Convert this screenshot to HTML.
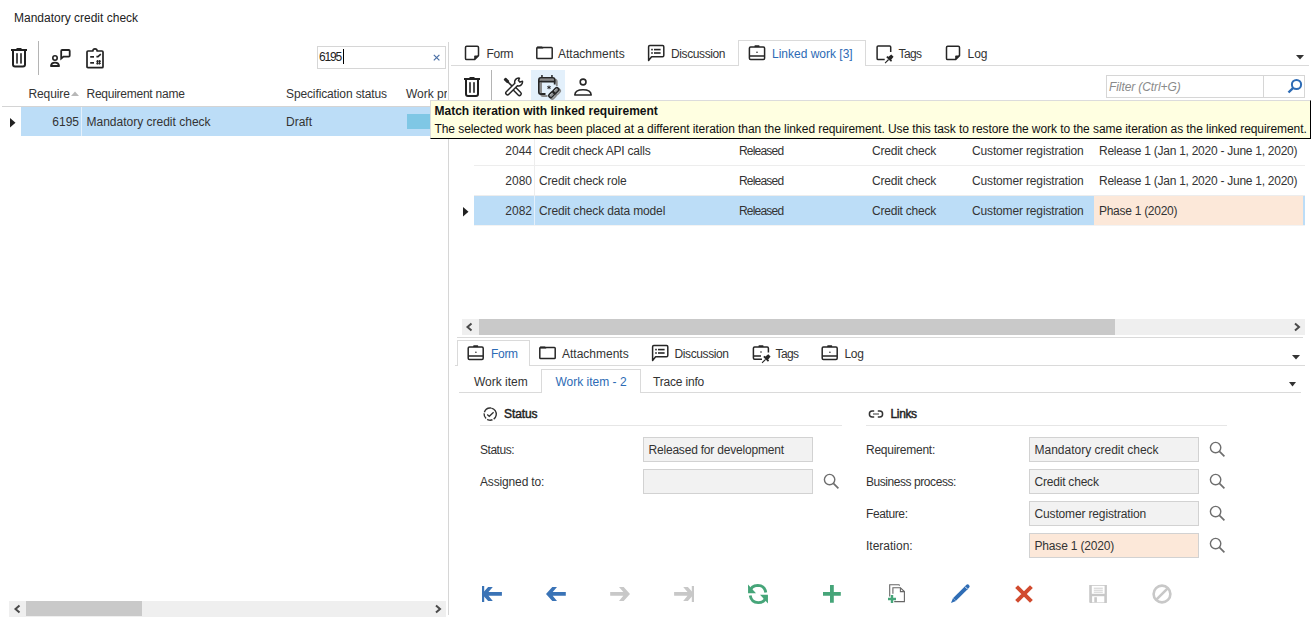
<!DOCTYPE html>
<html><head><meta charset="utf-8">
<style>
*{box-sizing:border-box}
html,body{margin:0;padding:0}
body{width:1316px;height:622px;overflow:hidden;background:#fff;position:relative;font-family:"Liberation Sans",sans-serif;font-size:12px;color:#333}
.a{position:absolute}
.t{position:absolute;white-space:nowrap;line-height:14px}
.ln{position:absolute;background:#dadada}
.blue{color:#2d6bb5}
svg{position:absolute;overflow:visible}
.inp{position:absolute;background:#f2f2f2;border:1px solid #d2d2d2}
</style></head><body>

<!-- ============ LEFT PANEL ============ -->
<div class="t" style="left:14px;top:11px;color:#222">Mandatory credit check</div>

<!-- trash -->
<svg style="left:10px;top:47px" width="18" height="22" viewBox="0 0 18 22">
<rect x="1" y="2" width="16" height="2" fill="#222"/><rect x="6.5" y="1" width="5" height="1.5" fill="#222"/>
<path d="M3,4 V17.6 Q3,19.6 5,19.6 H13 Q15,19.6 15,17.6 V4" fill="none" stroke="#222" stroke-width="2"/>
<rect x="6.2" y="6.2" width="1.6" height="10.4" fill="#222"/><rect x="10.2" y="6.2" width="1.6" height="10.4" fill="#222"/>
</svg>
<div class="ln" style="left:38px;top:41px;width:1px;height:34px;background:#b4b4b4"></div>
<!-- person flag -->
<svg style="left:49px;top:48px" width="22" height="20" viewBox="0 0 22 20">
<circle cx="6" cy="10" r="2.2" fill="none" stroke="#222" stroke-width="1.6"/>
<path d="M2,18 Q2.2,14.6 6,14.6 Q9.8,14.6 10,18 Z" fill="none" stroke="#222" stroke-width="1.9" stroke-linejoin="round"/>
<path d="M12.2,10.6 V3 Q12.2,2 13.2,2 H19.8 Q20.7,2 20.7,3 V7.6 Q20.7,8.6 19.8,8.6 H14.5 L12.2,10.6 Z" fill="none" stroke="#222" stroke-width="1.8"/>
</svg>
<!-- clipboard -->
<svg style="left:85px;top:47px" width="20" height="22" viewBox="0 0 20 22">
<path d="M2,5 Q2,4 3,4 H7.8 Q8,1.8 10,1.8 Q12,1.8 12.2,4 H17 Q18,4 18,5 V19.7 Q18,20.7 17,20.7 H3 Q2,20.7 2,19.7 Z" fill="none" stroke="#222" stroke-width="1.7"/>
<rect x="5.2" y="9" width="3.8" height="1.7" fill="#222"/><rect x="5.2" y="15" width="3.8" height="1.7" fill="#222"/>
<path d="M11.4,9.6 H13 L15.8,7.2" fill="none" stroke="#222" stroke-width="1.6"/>
<path d="M11.2,14.3 H16 M11.2,16.3 H16 M12.7,13 L12.2,17.6 M14.7,13 L14.2,17.6" fill="none" stroke="#222" stroke-width="1.1"/>
</svg>

<!-- search box -->
<div class="a" style="left:317px;top:46px;width:129px;height:23px;border:1px solid #d6d6d6"></div>
<div class="t" style="left:319px;top:50px;color:#222;letter-spacing:-1.15px">6195</div>
<div class="a" style="left:343px;top:49px;width:1px;height:15px;background:#000"></div>
<svg style="left:433px;top:54px" width="8" height="8" viewBox="0 0 8 8"><path d="M0.8,0.8 L6.4,6.4 M6.4,0.8 L0.8,6.4" stroke="#4a6fa5" stroke-width="1.2"/></svg>

<!-- header -->
<div class="t" style="left:28.5px;top:87px;letter-spacing:-0.12px">Require</div>
<svg style="left:70.5px;top:91px" width="8" height="5" viewBox="0 0 8 5"><path d="M0,5 L4,0.5 L8,5 Z" fill="#b8b8b8"/></svg>
<div class="t" style="left:86.5px;top:87px;letter-spacing:-0.25px">Requirement name</div>
<div class="t" style="left:286px;top:87px;letter-spacing:-0.12px">Specification status</div>
<div class="a" style="left:0;top:80px;width:447px;height:20px;overflow:hidden"><div class="t" style="left:406px;top:7px">Work progress</div></div>
<div class="ln" style="left:2px;top:106px;width:446px;height:1px;background:#d4d4d4"></div>
<div class="a" style="left:21px;top:107px;width:427px;height:29px;background:#bcddf7"></div>
<div class="a" style="left:81px;top:107px;width:1px;height:29px;background:#e4f0fb"></div>
<svg style="left:10px;top:118px" width="6" height="10" viewBox="0 0 6 10"><path d="M0,0 L5.5,4.7 L0,9.4 Z" fill="#222"/></svg>
<div class="t" style="left:0;width:79px;text-align:right;top:115px">6195</div>
<div class="t" style="left:86.5px;top:115px">Mandatory credit check</div>
<div class="t" style="left:286px;top:115px">Draft</div>
<div class="a" style="left:407px;top:114px;width:30px;height:15px;background:#7fc7e5"></div>

<!-- left h-scrollbar -->
<div class="a" style="left:9px;top:601px;width:437px;height:16px;background:#efefef"></div>
<div class="a" style="left:26px;top:601px;width:116px;height:15px;background:#c9c9c9"></div>
<svg style="left:14px;top:604.5px" width="7" height="8" viewBox="0 0 7 8"><path d="M5.5,0.5 L1.5,4 L5.5,7.5" fill="none" stroke="#4a4a4a" stroke-width="2"/></svg>
<svg style="left:435px;top:604.5px" width="7" height="8" viewBox="0 0 7 8"><path d="M1,0.5 L5,4 L1,7.5" fill="none" stroke="#4a4a4a" stroke-width="2"/></svg>

<!-- splitter -->
<div class="ln" style="left:448px;top:42px;width:1px;height:573px;background:#d6d6d6"></div>

<!-- ============ RIGHT PANEL TOP TABS ============ -->
<div class="ln" style="left:451px;top:65px;width:858px;height:1px"></div>
<div class="a" style="left:738px;top:40px;width:128px;height:26px;border:1px solid #dadada;border-bottom:none;background:#fff"></div>
<div class="t" style="left:486.5px;top:47px;letter-spacing:-0.3px">Form</div>
<div class="t" style="left:558px;top:47px">Attachments</div>
<div class="t" style="left:671px;top:47px;letter-spacing:-0.39px">Discussion</div>
<div class="t blue" style="left:772px;top:47px">Linked work [3]</div>
<div class="t" style="left:898.5px;top:47px;letter-spacing:-0.6px">Tags</div>
<div class="t" style="left:967.5px;top:47px">Log</div>
<svg style="left:1296px;top:55px" width="8" height="5" viewBox="0 0 8 5"><path d="M0,0 L8,0 L4,4.5 Z" fill="#333"/></svg>


<!-- top tab icons -->
<svg style="left:464px;top:45px" width="16" height="16" viewBox="0 0 16 16">
<path d="M1.5,2.4 Q1.5,1.2 2.7,1.2 H13.3 Q14.5,1.2 14.5,2.4 V10.6 L10.5,14.6 H2.7 Q1.5,14.6 1.5,13.4 Z" fill="none" stroke="#262626" stroke-width="1.5" stroke-linejoin="round"/>
<path d="M10.2,14.8 V11.2 Q10.2,10.4 11,10.4 H14.8 Z" fill="#262626"/></svg>
<svg style="left:536px;top:46px" width="17" height="14" viewBox="0 0 17 14">
<path d="M0.8,11.8 V2.2 Q0.8,1.4 1.6,1.4 H15.4 Q16.2,1.4 16.2,2.2 V11.8 Q16.2,12.6 15.4,12.6 H1.6 Q0.8,12.6 0.8,11.8 Z" fill="none" stroke="#262626" stroke-width="1.5"/>
<path d="M0.8,2.4 V1.2 Q0.8,0.6 1.4,0.6 H6 L7.2,1.8 V2.4 Z" fill="#262626"/></svg>
<svg style="left:647px;top:44px" width="18" height="18" viewBox="0 0 18 18">
<path d="M1.6,16.4 V2.8 Q1.6,1.6 2.8,1.6 H15.6 Q16.8,1.6 16.8,2.8 V11.6 Q16.8,12.8 15.6,12.8 H4.6 Z" fill="none" stroke="#262626" stroke-width="1.5" stroke-linejoin="round"/>
<rect x="4.2" y="4.8" width="1.6" height="1.6" fill="#262626"/><rect x="7" y="4.8" width="6.6" height="1.6" fill="#262626"/>
<rect x="4.2" y="8.2" width="1.6" height="1.6" fill="#262626"/><rect x="7" y="8.2" width="6.6" height="1.6" fill="#262626"/></svg>
<svg style="left:748px;top:44px" width="18" height="17" viewBox="0 0 18 17">
<path d="M2.6,3 H15.4 Q16.6,3 16.6,4.2 V14.2 Q16.6,15.4 15.4,15.4 H2.6 Q1.4,15.4 1.4,14.2 V4.2 Q1.4,3 2.6,3 Z M1.4,12 H16.6" fill="none" stroke="#262626" stroke-width="1.5"/>
<rect x="6.5" y="1.2" width="5" height="1.8" rx="0.6" fill="#262626"/><circle cx="9" cy="8.2" r="0.8" fill="#262626"/></svg>
<svg style="left:876px;top:45px" width="20" height="19" viewBox="0 0 20 19">
<path d="M8.7,14.6 H2.2 Q1.1,14.6 1.1,13.5 V2.1 Q1.1,1 2.2,1 H13.6 Q14.7,1 14.7,2.1 V7" fill="none" stroke="#262626" stroke-width="1.5"/>
<g transform="translate(12.6,14.5) rotate(45)"><path d="M-1.6,-5.4 H1.6 L2.1,-1.4 H-2.1 Z M-3.3,-1.7 H3.3 V0 H-3.3 Z" fill="#262626"/><path d="M0,0 V5" stroke="#262626" stroke-width="1.1"/></g></svg>
<svg style="left:945px;top:45px" width="16" height="16" viewBox="0 0 16 16">
<path d="M1.5,2.4 Q1.5,1.2 2.7,1.2 H13.3 Q14.5,1.2 14.5,2.4 V10.6 L10.5,14.6 H2.7 Q1.5,14.6 1.5,13.4 Z" fill="none" stroke="#262626" stroke-width="1.5" stroke-linejoin="round"/>
<path d="M10.2,14.8 V11.2 Q10.2,10.4 11,10.4 H14.8 Z" fill="#262626"/></svg>

<!-- toolbar -->
<svg style="left:463px;top:76px" width="18" height="22" viewBox="0 0 18 22">
<rect x="1" y="2" width="16" height="2" fill="#222"/><rect x="6.5" y="1" width="5" height="1.5" fill="#222"/>
<path d="M3,4 V18 Q3,20 5,20 H13 Q15,20 15,18 V4" fill="none" stroke="#222" stroke-width="2"/>
<rect x="6.2" y="6.2" width="1.6" height="10.6" fill="#222"/><rect x="10.2" y="6.2" width="1.6" height="10.6" fill="#222"/>
</svg>
<div class="ln" style="left:491px;top:70px;width:1px;height:30px;background:#b4b4b4"></div>
<div class="a" style="left:531px;top:70px;width:34px;height:30px;background:#e3f0fb"></div>


<!-- tools -->
<svg style="left:500px;top:74px" width="28" height="26" viewBox="0 0 28 26">
<rect x="-5.1" y="-1.8" width="10.2" height="3.6" rx="1.8" transform="translate(17.1,17.4) rotate(45)" fill="#fff" stroke="#262626" stroke-width="1.5"/>
<path d="M7.5,7.5 L13.5,13.5" stroke="#262626" stroke-width="1.6"/>
<rect x="-3" y="-1.6" width="5.6" height="3.2" rx="1" transform="translate(6.6,6.6) rotate(45)" fill="#262626"/>
<path transform="translate(18.6,8) rotate(-45)" d="M-3.5,-1.8 H-15.6 A1.8,1.8 0 0 0 -15.6,1.8 H-3.5 A3.95,3.95 0 0 0 3.3,2.1 L0.9,1.1 V-1.1 L3.3,-2.1 A3.95,3.95 0 0 0 -3.5,-1.8 Z" fill="#fff" stroke="#262626" stroke-width="1.5" stroke-linejoin="round"/>
</svg>
<!-- calendar -->
<svg style="left:532px;top:70px" width="34" height="31" viewBox="0 0 34 31">
<path d="M15.5,26 H11 Q9.1,26 9.1,24 V11.6 Q9.1,9.6 11,9.6 H22.8 Q24.8,9.6 24.8,11.6 V16" fill="none" stroke="#8a8a8a" stroke-width="1.8"/>
<path d="M13.5,24 H8.9 Q6.9,24 6.9,22 V9.9 Q6.9,7.9 8.9,7.9 H20.7 Q22.7,7.9 22.7,9.9 V14.5" fill="none" stroke="#262626" stroke-width="1.8"/>
<rect x="7.8" y="8.7" width="14" height="2" fill="#8a8a8a"/>
<rect x="6.2" y="10.7" width="17.2" height="1.8" fill="#262626"/>
<rect x="7.8" y="12.5" width="2" height="10.6" fill="#8a8a8a"/>
<rect x="9.2" y="5" width="1.5" height="3" fill="#262626"/><rect x="19.2" y="5" width="1.5" height="3" fill="#262626"/>
<g transform="translate(23.3,24) rotate(-45)" fill="none" stroke="#8a8a8a" stroke-width="1.6"><rect x="-6.2" y="-1.9" width="6.6" height="3.8" rx="1.9"/><rect x="-0.4" y="-1.9" width="6.6" height="3.8" rx="1.9"/></g>
<g transform="translate(21.8,22.6) rotate(-45)" fill="none" stroke="#262626" stroke-width="1.6"><rect x="-6.2" y="-1.9" width="6.6" height="3.8" rx="1.9"/><rect x="-0.4" y="-1.9" width="6.6" height="3.8" rx="1.9"/></g>
<path d="M17,15.6 V19.2 M15.3,16.5 L18.7,18.3 M18.7,16.5 L15.3,18.3" stroke="#262626" stroke-width="1"/>
</svg>
<!-- person -->
<svg style="left:573px;top:77px" width="20" height="20" viewBox="0 0 20 20">
<circle cx="10.1" cy="5" r="2.9" fill="none" stroke="#262626" stroke-width="1.6"/>
<path d="M1.8,18 Q2.2,12.8 10,12.8 Q17.8,12.8 18.2,18 Z" fill="none" stroke="#262626" stroke-width="1.6" stroke-linejoin="round"/></svg>

<!-- filter -->
<div class="a" style="left:1106px;top:75px;width:199px;height:23px;border:1px solid #d6d6d6"></div>
<div class="ln" style="left:1263px;top:76px;width:1px;height:21px;background:#d6d6d6"></div>
<div class="t" style="left:1109px;top:80px;color:#8a8a8a;font-style:italic;letter-spacing:-0.09px">Filter (Ctrl+G)</div>
<svg style="left:1287px;top:78px" width="16" height="16" viewBox="0 0 16 16"><circle cx="9.5" cy="6.5" r="4.6" fill="none" stroke="#2d6bb5" stroke-width="2"/><path d="M6.2,9.8 L1.5,14.5" stroke="#2d6bb5" stroke-width="2.4"/></svg>

<!-- grid rows -->
<div class="ln" style="left:474px;top:165px;width:831px;height:1px;background:#ededed"></div>
<div class="ln" style="left:474px;top:195px;width:831px;height:1px;background:#ededed"></div>
<div class="a" style="left:474px;top:196px;width:620px;height:29px;background:#bcddf7"></div>
<div class="ln" style="left:474px;top:225px;width:831px;height:1px;background:#f3f3f3"></div>
<div class="a" style="left:1094px;top:196px;width:209px;height:29px;background:#fce8d9"></div>
<div class="a" style="left:1303px;top:196px;width:2px;height:29px;background:#bcddf7"></div>
<div class="ln" style="left:534px;top:135px;width:1px;height:61px;background:#ededed"></div>
<div class="ln" style="left:534px;top:196px;width:1px;height:29px;background:#e4f0fb"></div>
<svg style="left:463px;top:207px" width="6" height="10" viewBox="0 0 6 10"><path d="M0,0 L5.5,4.7 L0,9.4 Z" fill="#222"/></svg>

<div class="t" style="left:474px;width:58px;text-align:right;top:144px">2044</div>
<div class="t" style="left:539px;top:144px;letter-spacing:-0.21px">Credit check API calls</div>
<div class="t" style="left:739px;top:144px;letter-spacing:-0.8px">Released</div>
<div class="t" style="left:872px;top:144px;letter-spacing:-0.22px">Credit check</div>
<div class="t" style="left:972px;top:144px;letter-spacing:-0.15px">Customer registration</div>
<div class="t" style="left:1099px;top:144px;letter-spacing:-0.26px">Release 1 (Jan 1, 2020 - June 1, 2020)</div>

<div class="t" style="left:474px;width:58px;text-align:right;top:174px">2080</div>
<div class="t" style="left:539px;top:174px;letter-spacing:-0.15px">Credit check role</div>
<div class="t" style="left:739px;top:174px;letter-spacing:-0.8px">Released</div>
<div class="t" style="left:872px;top:174px;letter-spacing:-0.22px">Credit check</div>
<div class="t" style="left:972px;top:174px;letter-spacing:-0.15px">Customer registration</div>
<div class="t" style="left:1099px;top:174px;letter-spacing:-0.26px">Release 1 (Jan 1, 2020 - June 1, 2020)</div>

<div class="t" style="left:474px;width:58px;text-align:right;top:204px">2082</div>
<div class="t" style="left:539px;top:204px;letter-spacing:-0.14px">Credit check data model</div>
<div class="t" style="left:739px;top:204px;letter-spacing:-0.8px">Released</div>
<div class="t" style="left:872px;top:204px;letter-spacing:-0.22px">Credit check</div>
<div class="t" style="left:972px;top:204px;letter-spacing:-0.15px">Customer registration</div>
<div class="t" style="left:1099px;top:204px;letter-spacing:-0.28px">Phase 1 (2020)</div>

<!-- grid scrollbar -->
<div class="a" style="left:462px;top:319px;width:843px;height:16px;background:#efefef"></div>
<div class="a" style="left:479px;top:319px;width:636px;height:16px;background:#c9c9c9"></div>
<svg style="left:466px;top:323px" width="7" height="8" viewBox="0 0 7 8"><path d="M5.5,0.5 L1.5,4 L5.5,7.5" fill="none" stroke="#4a4a4a" stroke-width="2"/></svg>
<svg style="left:1293.5px;top:323px" width="7" height="8" viewBox="0 0 7 8"><path d="M1,0.5 L5,4 L1,7.5" fill="none" stroke="#4a4a4a" stroke-width="2"/></svg>
<div class="ln" style="left:457px;top:337px;width:846px;height:1px"></div>

<!-- ============ BOTTOM FORM TABS ============ -->
<div class="ln" style="left:455px;top:365px;width:850px;height:1px"></div>
<div class="a" style="left:457px;top:340px;width:73px;height:26px;border:1px solid #dadada;border-bottom:none;background:#fff"></div>
<div class="t blue" style="left:491px;top:347px;letter-spacing:-0.3px">Form</div>
<div class="t" style="left:562px;top:347px">Attachments</div>
<div class="t" style="left:674.5px;top:347px;letter-spacing:-0.39px">Discussion</div>
<div class="t" style="left:775.5px;top:347px;letter-spacing:-0.6px">Tags</div>
<div class="t" style="left:844.5px;top:347px;letter-spacing:-0.3px">Log</div>
<svg style="left:1292px;top:355px" width="8" height="5" viewBox="0 0 8 5"><path d="M0,0 L8,0 L4,4.5 Z" fill="#333"/></svg>


<svg style="left:467px;top:344px" width="18" height="17" viewBox="0 0 18 17">
<path d="M2.4,3 H15 Q16.2,3 16.2,4.2 V14.2 Q16.2,15.4 15,15.4 H2.4 Q1.2,15.4 1.2,14.2 V4.2 Q1.2,3 2.4,3 Z M1.2,12 H16.2" fill="none" stroke="#262626" stroke-width="1.5"/>
<rect x="6.2" y="1.3" width="5" height="1.8" rx="0.6" fill="#262626"/><circle cx="8.9" cy="8.2" r="0.8" fill="#262626"/></svg>
<svg style="left:539px;top:346px" width="17" height="14" viewBox="0 0 17 14">
<path d="M0.8,11.8 V2.2 Q0.8,1.4 1.6,1.4 H15.4 Q16.2,1.4 16.2,2.2 V11.8 Q16.2,12.6 15.4,12.6 H1.6 Q0.8,12.6 0.8,11.8 Z" fill="none" stroke="#262626" stroke-width="1.5"/>
<path d="M0.8,2.4 V1.2 Q0.8,0.6 1.4,0.6 H6 L7.2,1.8 V2.4 Z" fill="#262626"/></svg>
<svg style="left:651px;top:344px" width="18" height="18" viewBox="0 0 18 18">
<path d="M1.6,16.4 V2.8 Q1.6,1.6 2.8,1.6 H15.6 Q16.8,1.6 16.8,2.8 V11.6 Q16.8,12.8 15.6,12.8 H4.6 Z" fill="none" stroke="#262626" stroke-width="1.5" stroke-linejoin="round"/>
<rect x="4.2" y="4.8" width="1.6" height="1.6" fill="#262626"/><rect x="7" y="4.8" width="6.6" height="1.6" fill="#262626"/>
<rect x="4.2" y="8.2" width="1.6" height="1.6" fill="#262626"/><rect x="7" y="8.2" width="6.6" height="1.6" fill="#262626"/></svg>
<svg style="left:752px;top:344px" width="20" height="20" viewBox="0 0 20 20">
<path d="M10,15.3 H2.6 Q1.4,15.3 1.4,14.1 V4.2 Q1.4,3 2.6,3 H15.2 Q16.4,3 16.4,4.2 V8.6 M1.4,12 H9" fill="none" stroke="#262626" stroke-width="1.5"/>
<rect x="6.5" y="1.3" width="5" height="1.8" rx="0.6" fill="#262626"/><circle cx="9" cy="8" r="0.8" fill="#262626"/>
<g transform="translate(13.6,15.3) rotate(45)"><path d="M-1.6,-5.4 H1.6 L2.1,-1.4 H-2.1 Z M-3.3,-1.7 H3.3 V0 H-3.3 Z" fill="#262626"/><path d="M0,0 V5" stroke="#262626" stroke-width="1.1"/></g></svg>
<svg style="left:821px;top:344px" width="18" height="17" viewBox="0 0 18 17">
<path d="M2.4,3 H15 Q16.2,3 16.2,4.2 V14.2 Q16.2,15.4 15,15.4 H2.4 Q1.2,15.4 1.2,14.2 V4.2 Q1.2,3 2.4,3 Z M1.2,12 H16.2" fill="none" stroke="#262626" stroke-width="1.5"/>
<rect x="6.2" y="1.3" width="5" height="1.8" rx="0.6" fill="#262626"/><circle cx="8.9" cy="8.2" r="0.8" fill="#262626"/></svg>

<!-- subtabs -->
<div class="ln" style="left:459px;top:392px;width:842px;height:1px"></div>
<div class="a" style="left:541px;top:369px;width:100px;height:24px;border:1px solid #dadada;border-bottom:none;background:#fff"></div>
<div class="t" style="left:474px;top:375px">Work item</div>
<div class="t blue" style="left:555.5px;top:375px">Work item - 2</div>
<div class="t" style="left:653px;top:375px;letter-spacing:-0.18px">Trace info</div>
<svg style="left:1288.5px;top:381.5px" width="7" height="5" viewBox="0 0 7 5"><path d="M0,0 L7,0 L3.5,4.5 Z" fill="#333"/></svg>

<!-- Status section -->
<div class="t" style="left:504px;top:407px;color:#222;-webkit-text-stroke:0.45px #222;letter-spacing:-0.1px">Status</div>
<div class="ln" style="left:480px;top:425px;width:362px;height:1px;background:#e6e6e6"></div>
<div class="t" style="left:480px;top:443px;letter-spacing:-0.47px">Status:</div>
<div class="t" style="left:480px;top:475px;letter-spacing:-0.15px">Assigned to:</div>
<div class="inp" style="left:643px;top:437px;width:170px;height:25px"></div>
<div class="t" style="left:648.5px;top:443px;letter-spacing:-0.2px">Released for development</div>
<div class="inp" style="left:643px;top:469px;width:170px;height:25px"></div>


<svg style="left:482px;top:406px" width="16" height="16" viewBox="0 0 16 16">
<circle cx="8.2" cy="8.1" r="6.1" fill="none" stroke="#333" stroke-width="1.4" stroke-dasharray="14 1.3 5.5 1.3 5.5 1.3 8.1 1.3" transform="rotate(-80 8.2 8.1)"/>
<path d="M5.2,8.4 L7.3,10.3 L11.6,6.2" fill="none" stroke="#333" stroke-width="1.3"/></svg>
<svg style="left:823px;top:473px" width="17" height="17" viewBox="0 0 17 17"><circle cx="6.6" cy="6.6" r="5.2" fill="none" stroke="#6e6e6e" stroke-width="1.4"/><path d="M10.4,10.4 L15.4,15.4" stroke="#6e6e6e" stroke-width="1.7"/></svg>
<!-- Links section -->
<div class="t" style="left:890.5px;top:407px;color:#222;-webkit-text-stroke:0.45px #222;letter-spacing:-0.35px">Links</div>
<div class="ln" style="left:866px;top:425px;width:361px;height:1px;background:#e6e6e6"></div>
<div class="t" style="left:866px;top:443px;letter-spacing:-0.25px">Requirement:</div>
<div class="t" style="left:866px;top:475px;letter-spacing:-0.44px">Business process:</div>
<div class="t" style="left:866px;top:507px;letter-spacing:-0.39px">Feature:</div>
<div class="t" style="left:866px;top:539px">Iteration:</div>
<div class="inp" style="left:1029px;top:437px;width:170px;height:25px"></div>
<div class="inp" style="left:1029px;top:469px;width:170px;height:25px"></div>
<div class="inp" style="left:1029px;top:501px;width:170px;height:25px"></div>
<div class="inp" style="left:1029px;top:533px;width:170px;height:25px;background:#fce8d9"></div>
<div class="t" style="left:1034.5px;top:443px">Mandatory credit check</div>
<div class="t" style="left:1034.5px;top:475px;letter-spacing:-0.21px">Credit check</div>
<div class="t" style="left:1034.5px;top:507px;letter-spacing:-0.15px">Customer registration</div>
<div class="t" style="left:1034.5px;top:539px;letter-spacing:-0.18px">Phase 1 (2020)</div>


<svg style="left:868px;top:409px" width="17" height="10" viewBox="0 0 17 10">
<path d="M6.2,2 H4.2 Q1.4,2 1.4,5 Q1.4,8 4.2,8 H6.2 M9.8,2 H11.8 Q14.6,2 14.6,5 Q14.6,8 11.8,8 H9.8" fill="none" stroke="#333" stroke-width="1.5"/>
<path d="M5,5 H11" stroke="#777" stroke-width="1.5"/></svg>
<svg style="left:1209px;top:440.5px" width="17" height="17" viewBox="0 0 17 17"><circle cx="6.6" cy="6.6" r="5.2" fill="none" stroke="#6e6e6e" stroke-width="1.4"/><path d="M10.4,10.4 L15.4,15.4" stroke="#6e6e6e" stroke-width="1.7"/></svg><svg style="left:1209px;top:472.5px" width="17" height="17" viewBox="0 0 17 17"><circle cx="6.6" cy="6.6" r="5.2" fill="none" stroke="#6e6e6e" stroke-width="1.4"/><path d="M10.4,10.4 L15.4,15.4" stroke="#6e6e6e" stroke-width="1.7"/></svg><svg style="left:1209px;top:504.5px" width="17" height="17" viewBox="0 0 17 17"><circle cx="6.6" cy="6.6" r="5.2" fill="none" stroke="#6e6e6e" stroke-width="1.4"/><path d="M10.4,10.4 L15.4,15.4" stroke="#6e6e6e" stroke-width="1.7"/></svg><svg style="left:1209px;top:536.5px" width="17" height="17" viewBox="0 0 17 17"><circle cx="6.6" cy="6.6" r="5.2" fill="none" stroke="#6e6e6e" stroke-width="1.4"/><path d="M10.4,10.4 L15.4,15.4" stroke="#6e6e6e" stroke-width="1.7"/></svg>
<!-- bottom toolbar -->
<svg style="left:480px;top:584px" width="24" height="20" viewBox="0 0 24 20">
<rect x="2" y="2" width="2.2" height="16" fill="#3a73b6"/>
<path d="M1.8,9.9 L8.1,3 H12.8 L8.5,8.1 H21.9 V11.8 H8.5 L12.8,16.9 H8.1 Z" fill="#3a73b6"/></svg>
<svg style="left:544px;top:584px" width="24" height="20" viewBox="0 0 24 20">
<path d="M2,9.9 L8.3,3 H13 L8.7,8.1 H21.8 V11.8 H8.7 L13,16.9 H8.3 Z" fill="#3a73b6"/></svg>
<svg style="left:608px;top:584px" width="24" height="20" viewBox="0 0 24 20">
<path d="M22,9.9 L15.7,3 H11 L15.3,8.1 H2.2 V11.8 H15.3 L11,16.9 H15.7 Z" fill="#c8c8c8"/></svg>
<svg style="left:672px;top:584px" width="24" height="20" viewBox="0 0 24 20">
<rect x="19.8" y="2" width="2.2" height="16" fill="#c8c8c8"/>
<path d="M22.2,9.9 L15.9,3 H11.2 L15.5,8.1 H2.1 V11.8 H15.5 L11.2,16.9 H15.9 Z" fill="#c8c8c8"/></svg>
<svg style="left:746px;top:582px" width="24" height="24" viewBox="0 0 24 24">
<path d="M4,10.2 Q4.8,3.4 11.8,3.3 Q18.6,3.4 19.8,10.4" fill="none" stroke="#46a579" stroke-width="2.8"/>
<path d="M20,13.8 Q19.2,20.6 12.2,20.7 Q5.4,20.6 4.2,13.6" fill="none" stroke="#46a579" stroke-width="2.8"/>
<path d="M2,2.6 L2.1,11.2 L10,11.2 Z" fill="#46a579"/><path d="M22,21.4 L21.9,12.8 L14,12.8 Z" fill="#46a579"/></svg>
<svg style="left:822px;top:584px" width="20" height="20" viewBox="0 0 20 20">
<path d="M8,1 H11.8 V8 H18.8 V11.8 H11.8 V18.8 H8 V11.8 H1 V8 H8 Z" fill="#46a579"/></svg>
<svg style="left:886px;top:582px" width="21" height="22" viewBox="0 0 21 22">
<path d="M3.7,14.6 V2.7 H13 L13.6,3.6" fill="none" stroke="#666" stroke-width="1.1"/>
<path d="M6.9,11.7 V5.8 H14.4 L18.4,9.6 V19.6 H8.2" fill="none" stroke="#666" stroke-width="1.1"/>
<path d="M14.4,5.8 V9.6 H18.4" fill="none" stroke="#666" stroke-width="1.1"/>
<path d="M6,13.1 V20.9 M2,17 H10" stroke="#46a579" stroke-width="2.4"/></svg>
<svg style="left:950px;top:584px" width="20" height="20" viewBox="0 0 20 20">
<path d="M4.6,15.4 L16.2,3.8" stroke="#2f6db5" stroke-width="4"/>
<path d="M16.2,3.8 L17.6,2.4" stroke="#2f6db5" stroke-width="4" stroke-linecap="round"/>
<path d="M15,2.6 L17.4,5" stroke="#fff" stroke-width="0.9"/>
<path d="M3,14 L6,17 L1,19 Z" fill="#2f6db5"/></svg>
<svg style="left:1014px;top:584px" width="20" height="20" viewBox="0 0 20 20">
<path d="M2.6,2.6 L17.4,17.4 M17.4,2.6 L2.6,17.4" stroke="#d14b2f" stroke-width="4"/></svg>
<svg style="left:1088px;top:584px" width="20" height="20" viewBox="0 0 20 20">
<path d="M1.2,1 H18.9 V19 H2 L1.2,18.2 Z" fill="#c8c8c8"/>
<rect x="3.8" y="1.8" width="12.8" height="8" fill="#fff"/>
<rect x="4.1" y="12.2" width="12.2" height="6.2" fill="#fff"/>
<rect x="6.3" y="13.2" width="2.6" height="5.2" fill="#c8c8c8"/>
<path d="M5.8,4.2 H14.8 M5.8,6.2 H14.8 M5.8,8.2 H14.8" stroke="#c8c8c8" stroke-width="0.9"/></svg>
<svg style="left:1151px;top:583px" width="22" height="22" viewBox="0 0 22 22">
<circle cx="11" cy="11" r="8.4" fill="none" stroke="#c8c8c8" stroke-width="2.6"/>
<path d="M5.6,16.4 L16.4,5.6" stroke="#c8c8c8" stroke-width="2.6"/></svg>

<!-- ============ TOOLTIP ============ -->
<div class="a" style="left:430px;top:100px;width:881px;height:39px;background:#ffffe1;border-top:1px solid #dcdcdc;border-left:1px solid #dcdcdc;border-right:1px solid #000;border-bottom:1px solid #000"></div>
<div class="t" style="left:434.5px;top:104px;color:#111;font-weight:bold">Match iteration with linked requirement</div>
<div class="t" style="left:434.5px;top:122px;color:#111;letter-spacing:-0.075px">The selected work has been placed at a different iteration than the linked requirement. Use this task to restore the work to the same iteration as the linked requirement.</div>

</body></html>
